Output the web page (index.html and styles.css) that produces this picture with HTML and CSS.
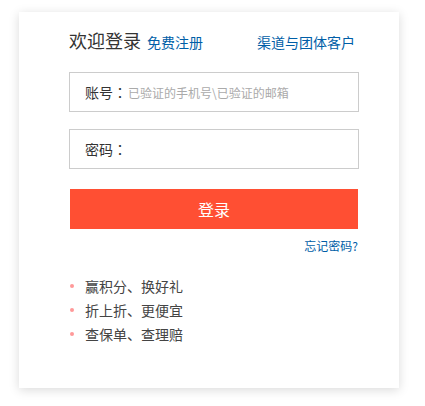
FILE: index.html
```html
<!DOCTYPE html>
<html lang="zh-CN">
<head>
  <meta charset="UTF-8" />
  <title>欢迎登录</title>
  <link rel="stylesheet" href="styles.css">
</head>
<body>
  <div class="login-box">
    <div class="login-header">
      <div class="login-title">
        <h2>欢迎登录</h2>
        <a href="#" class="link">免费注册</a>
      </div>
      <a href="#" class="link">渠道与团体客户</a>
    </div>

    <div class="field">
      <label>账号：</label>
      <input type="text" placeholder="已验证的手机号\已验证的邮箱" />
    </div>
    <div class="field field-pwd">
      <label>密码：</label>
      <input type="password" />
    </div>

    <button class="btn-login">登录</button>
    <div class="forgot"><a href="#" class="link">忘记密码?</a></div>

    <ul class="perks">
      <li>赢积分、换好礼</li>
      <li>折上折、更便宜</li>
      <li>查保单、查理赔</li>
    </ul>
  </div>
</body>
</html>
```

FILE: styles.css
```css
:root {
  --blue: #005ea7;
  --red: #ff4f33;
  --border: #cccccc;
}

body {
  font-family: "Microsoft YaHei", "Noto Sans CJK SC", sans-serif;
  margin: 0;
  padding: 12px 26px 18px 19px;
  background: #fff;
  color: #333;
}

.login-box {
  width: 380px;
  height: 376px;
  box-sizing: border-box;
  padding: 16px 40px 0 50px;
  background: #fff;
  box-shadow: 0 2px 10px rgba(0,0,0,0.15);
}

.login-header {
  display: flex;
  justify-content: space-between;
  align-items: baseline;
  height: 24px;
  margin-right: 4px;
}

.login-title {
  display: flex;
  align-items: baseline;
  gap: 6px;
}

.login-title h2 {
  margin: 0;
  font-size: 18px;
  font-weight: normal;
  line-height: 24px;
  color: #333;
}

.link {
  color: var(--blue);
  text-decoration: none;
  font-size: 14px;
}

.field {
  display: flex;
  align-items: center;
  height: 40px;
  box-sizing: border-box;
  border: 1px solid var(--border);
  margin-top: 20px;
  padding-left: 15px;
}

.field-pwd {
  margin-top: 17px;
}

/* centred full-width colon, as in the original */
.field label {
  font-family: "Noto Sans CJK TC", sans-serif;
  font-feature-settings: "locl" 0;
  font-size: 14px;
  color: #333;
  white-space: nowrap;
}

.field input {
  flex: 1;
  min-width: 0;
  border: none;
  outline: none;
  font-family: inherit;
  font-size: 12px;
  padding: 0;
  margin-left: 1px;
  color: #333;
}

.field input::placeholder {
  color: #aaa;
}

.btn-login {
  display: block;
  width: 288px;
  height: 40px;
  margin: 20px 0 0 1px;
  border: none;
  background: var(--red);
  color: #fff;
  font-family: inherit;
  font-size: 16px;
  cursor: pointer;
}

.forgot {
  text-align: right;
  margin: 6px 1px 0 0;
  line-height: 18px;
}

.forgot .link {
  font-size: 12px;
}

.perks {
  list-style: none;
  margin: 19px 0 0;
  padding: 0;
}

.perks li {
  position: relative;
  padding-left: 16px;
  font-size: 14px;
  line-height: 24px;
  color: #444;
}

.perks li::before {
  content: "";
  position: absolute;
  left: 1px;
  top: 10px;
  width: 4px;
  height: 4px;
  border-radius: 50%;
  background: #f99;
}
```
